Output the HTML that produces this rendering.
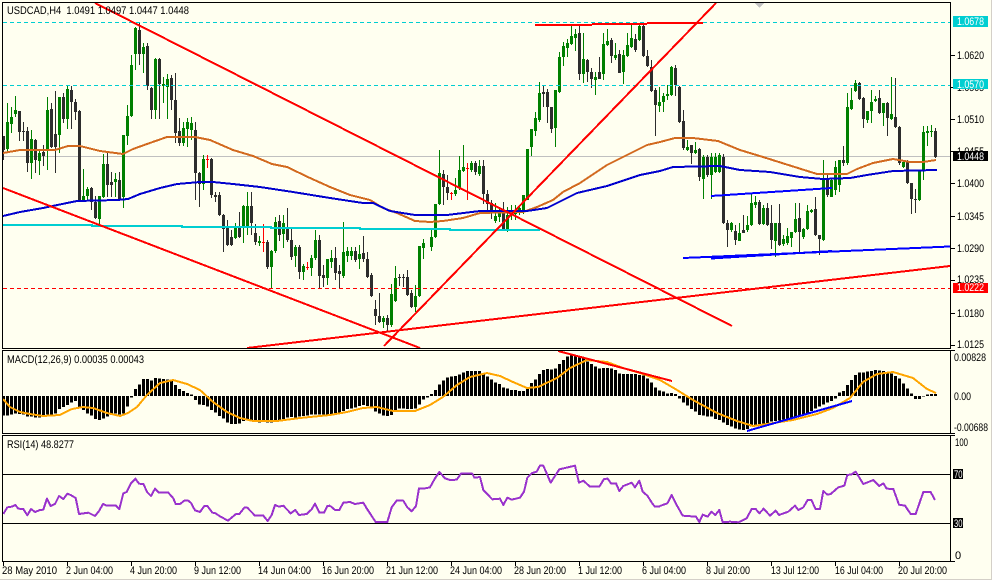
<!DOCTYPE html>
<html><head><meta charset="utf-8"><style>
html,body{margin:0;padding:0;background:#FFFFF0;width:992px;height:580px;overflow:hidden}
svg{display:block}
text{font-family:"Liberation Sans",sans-serif;font-size:11px;fill:#000}
</style></head><body>
<svg width="992" height="580" viewBox="0 0 992 580" xmlns="http://www.w3.org/2000/svg" shape-rendering="crispEdges">
<rect width="992" height="580" fill="#FFFFF0"/>
<rect x="991" y="0" width="1" height="580" fill="#D4D0C8"/>
<rect x="0" y="579" width="992" height="1" fill="#D4D0C8"/>

<!-- silver bid line -->
<path d="M3 156.5H950" stroke="#C0C0C0" fill="none"/>

<!-- candles: black wicks -->
<path fill="none" stroke="#2d2d2d" stroke-width="1" d="M3.5 136V160M19.5 111V141M23.5 122V141M27.5 127V172M35.5 139V173M43.5 145V166M51.5 103V148M55.5 91V173M63.5 93V123M71.5 86V129M75.5 99V120M79.5 110V202M91.5 187V210M95.5 196V219M107.5 153V197M111.5 172V197M119.5 172V199M139.5 23V65M147.5 43V90M151.5 87V119M159.5 58V119M171.5 75V110M175.5 73V143M179.5 118V146M195.5 122V200M199.5 172V207M211.5 158V198M215.5 192V202M219.5 192V216M223.5 214V252M227.5 220V246M231.5 230V246M239.5 212V238M251.5 192V235M255.5 224V245M267.5 240V269M279.5 215V241M287.5 208V242M291.5 227V260M299.5 245V279M319.5 235V289M323.5 265V287M335.5 247V280M339.5 265V288M355.5 247V262M363.5 236V262M367.5 252V278M371.5 273V297M375.5 300V325M379.5 293V323M387.5 315V331M399.5 274V286M403.5 274V287M407.5 270V296M411.5 290V308M443.5 170V205M447.5 175V200M475.5 161V175M483.5 160V204M487.5 190V214M491.5 200V219M503.5 202V229M543.5 85V107M547.5 89V123M551.5 107V133M579.5 26V80M587.5 59V82M591.5 68V88M599.5 57V79M611.5 38V63M619.5 50V73M635.5 34V52M643.5 24V57M647.5 50V67M651.5 60V92M655.5 88V136M675.5 65V96M679.5 86V123M683.5 110V150M691.5 145V164M699.5 148V181M707.5 155V177M723.5 154V224M727.5 220V247M735.5 225V245M743.5 215V233M759.5 200V225M767.5 203V226M771.5 205V249M779.5 204V246M799.5 203V252M815.5 197V236M819.5 235V255M827.5 175V197M843.5 146V166M859.5 82V100M863.5 97V128M879.5 90V114M887.5 102V136M895.5 78V128M899.5 126V165M907.5 160V184M911.5 183V214M915.5 189V213M935.5 128V158"/>
<!-- black bodies -->
<path fill="none" stroke="#2d2d2d" stroke-width="3" d="M3.5 136V150M19.5 111V132M23.5 131V132M27.5 131V163M35.5 140V160M43.5 152V156M51.5 109V147M55.5 134V147M63.5 97V119M71.5 90V102M75.5 102V112M79.5 111V200M91.5 188V202M95.5 202V218M107.5 164V185M111.5 182V185M119.5 180V199M139.5 30V54M147.5 46V86M151.5 88V110M159.5 59V84M171.5 78V100M175.5 100V133M179.5 131V143M195.5 130V173M199.5 173V184M211.5 159V195M215.5 195V197M219.5 195V215M223.5 215V229M227.5 228V245M231.5 237V245M239.5 226V237M251.5 206V223M255.5 233V242M267.5 242V267M279.5 221V235M287.5 228V240M291.5 240V257M299.5 247V272M319.5 240V276M323.5 275V278M335.5 258V273M339.5 271V274M355.5 251V260M363.5 253V259M367.5 259V277M371.5 275V296M375.5 309V316M379.5 316V322M387.5 318V325M399.5 277V278M403.5 277V278M407.5 277V295M411.5 293V307M443.5 174V187M447.5 187V193M475.5 163V172M483.5 166V194M487.5 194V204M491.5 203V213M503.5 213V229M543.5 92V94M547.5 92V107M551.5 107V129M579.5 33V74M587.5 60V72M591.5 72V79M599.5 72V79M611.5 40V56M619.5 54V73M635.5 39V50M643.5 26V56M647.5 56V66M651.5 67V91M655.5 90V105M675.5 68V85M679.5 87V122M683.5 121V148M691.5 145V153M699.5 149V177M707.5 157V175M723.5 157V223M727.5 223V230M735.5 231V240M743.5 230V233M759.5 202V224M767.5 208V225M771.5 223V240M779.5 223V245M799.5 218V232M815.5 209V235M819.5 235V239M827.5 180V195M843.5 160V163M859.5 83V99M863.5 98V119M879.5 98V113M887.5 103V118M895.5 117V127M899.5 127V163M907.5 162V183M911.5 183V199M915.5 199V200M935.5 131V157"/>
<!-- green wicks -->
<path fill="none" stroke="#008000" stroke-width="1" d="M7.5 103V153M11.5 107V133M15.5 96V117M31.5 130V179M39.5 149V175M47.5 97V170M59.5 97V153M67.5 85V129M83.5 169V200M87.5 187V200M99.5 196V224M103.5 154V198M115.5 173V197M123.5 135V208M127.5 105V145M131.5 55V117M135.5 27V70M143.5 43V73M155.5 58V119M163.5 77V103M167.5 74V119M183.5 122V146M187.5 118V147M191.5 117V140M203.5 155V190M235.5 223V239M243.5 205V243M247.5 192V235M259.5 236V246M271.5 250V289M275.5 217V253M283.5 215V248M295.5 245V267M303.5 264V280M311.5 255V276M315.5 230V260M327.5 259V285M331.5 250V268M343.5 222V278M347.5 247V262M351.5 247V260M359.5 245V269M383.5 316V328M391.5 284V327M395.5 266V302M415.5 285V312M419.5 246V297M423.5 239V259M431.5 230V251M435.5 204V238M439.5 150V205M455.5 178V196M459.5 156V190M463.5 145V172M471.5 161V172M479.5 160V176M495.5 203V223M499.5 208V222M507.5 207V232M511.5 205V220M515.5 205V220M519.5 205V215M523.5 195V214M527.5 149V200M531.5 129V156M535.5 112V136M539.5 82V122M555.5 90V147M559.5 52V93M563.5 42V66M567.5 39V57M571.5 26V45M575.5 29V51M583.5 33V83M595.5 72V95M603.5 33V80M607.5 29V46M615.5 43V60M623.5 50V84M627.5 33V57M631.5 25V48M639.5 24V41M659.5 87V112M663.5 93V112M667.5 85V100M671.5 66V96M687.5 140V151M695.5 142V154M703.5 155V199M711.5 153V199M715.5 153V173M719.5 153V173M731.5 222V232M739.5 223V241M747.5 216V232M751.5 193V226M755.5 196V208M763.5 205V225M775.5 223V257M783.5 235V246M787.5 228V245M791.5 232V247M795.5 203V233M803.5 228V239M807.5 205V230M811.5 209V213M823.5 160V241M831.5 178V197M835.5 161V195M839.5 160V192M847.5 93V165M851.5 88V110M855.5 80V92M867.5 111V123M871.5 90V123M875.5 96V102M883.5 103V126M891.5 77V120M903.5 162V168M919.5 170V201M923.5 126V180M927.5 126V146M931.5 125V137"/>
<!-- green bodies -->
<path fill="none" stroke="#008000" stroke-width="3" d="M7.5 122V149M11.5 117V124M15.5 110V114M31.5 139V163M39.5 153V161M47.5 110V149M59.5 97V135M67.5 89V119M83.5 196V200M87.5 189V196M99.5 196V219M103.5 164V197M115.5 179V182M123.5 135V197M127.5 116V136M131.5 65V116M135.5 28V54M143.5 47V54M155.5 59V110M163.5 84V86M167.5 79V87M183.5 128V143M187.5 122V129M191.5 123V130M203.5 159V184M235.5 226V238M243.5 206V226M247.5 206V226M259.5 241V243M271.5 251V267M275.5 222V251M283.5 223V234M295.5 247V256M303.5 266V272M311.5 258V268M315.5 240V258M327.5 259V278M331.5 258V262M343.5 252V276M347.5 251V256M351.5 251V256M359.5 254V259M383.5 318V322M391.5 294V325M395.5 278V301M415.5 296V307M419.5 246V296M423.5 243V248M431.5 237V247M435.5 204V237M439.5 173V204M455.5 190V194M459.5 170V188M463.5 167V171M471.5 163V170M479.5 166V174M495.5 216V221M499.5 213V217M507.5 215V229M511.5 212V215M515.5 212V214M519.5 208V212M523.5 195V212M527.5 149V200M531.5 129V147M535.5 118V131M539.5 93V120M555.5 90V128M559.5 57V92M563.5 46V57M567.5 43V48M571.5 36V44M575.5 34V38M583.5 59V74M595.5 77V80M603.5 44V74M607.5 41V45M615.5 55V58M623.5 55V72M627.5 45V56M631.5 38V47M639.5 26V40M659.5 102V106M663.5 96V102M667.5 94V96M671.5 67V95M687.5 147V150M695.5 150V153M703.5 157V179M711.5 157V175M715.5 157V172M719.5 155V172M731.5 223V230M739.5 233V241M747.5 225V230M751.5 203V225M755.5 202V205M763.5 208V224M775.5 223V241M783.5 239V244M787.5 236V243M791.5 232V238M795.5 219V232M803.5 229V237M807.5 211V229M811.5 210V212M823.5 178V240M831.5 180V197M835.5 167V190M839.5 160V185M847.5 107V163M851.5 100V109M855.5 83V91M867.5 111V120M871.5 102V111M875.5 99V101M883.5 103V113M891.5 114V119M903.5 162V167M919.5 170V200M923.5 132V170M927.5 131V133M931.5 131V132"/>
<!-- red doji -->
<path fill="none" stroke="#FF0000" stroke-width="1" d="M207.5 155V168M206 159.5H209M263.5 224V252M262 242.5H265M307.5 262V270M306 267.5H309M451.5 192V200M450 193.5H453M467.5 163V200M466 168.5H469"/>

<!-- moving averages -->
<g fill="none" stroke-width="2" stroke-linejoin="round">
<polyline stroke="#D2691E" points="3,153 20,150 55,150 68,146 80,146 100,151 123,154 133,149 147,144 167,137 195,137 210,140 233,150 253,156 272,164 287,167 310,178 330,187 350,195 370,200 383,208 397,213 415,221 430,222 443,221 463,218 480,213 523,212 537,207 553,200 563,192 580,183 607,165 637,150 647,145 660,142 675,138 693,138 718,141 740,150 763,157 782,163 817,174 847,174 857,169 873,163 893,159 910,162 923,162 936,160"/>
<polyline stroke="#0000CD" points="3,216 20,212 43,208 67,203 77,201 117,200 128,199 140,194 160,188 177,184 200,182 213,182 233,184 260,187 293,192 330,198 363,203 373,203 390,211 415,215 447,215 480,211 527,211 547,208 563,200 577,193 607,186 640,175 660,171 673,167 720,166 740,170 770,172 800,177 823,179 850,178 867,175 893,171 937,170"/>
<polyline stroke="#00CED1" points="3,225 92,225 92,226 182,226 182,227 271,227 271,228 360,228 360,229 450,229 450,230 540,230"/>
</g>

<!-- horizontal dashed levels -->
<g fill="none">
<path d="M3 22.5H950" stroke="#00CED1" stroke-dasharray="4 3"/>
<path d="M3 85.5H950" stroke="#00CED1" stroke-dasharray="4 3"/>
<path d="M3 288.5H950" stroke="#FF0000" stroke-dasharray="4 3"/>
</g>

<!-- trendlines -->
<g fill="none" stroke="#FF0000" stroke-width="2">
<path d="M95 3L732 326"/>
<path d="M3 188L420 348"/>
<path d="M247 348L950 266"/>
<path d="M384 346L716 3"/>
<path d="M535 25H592M592 24H647M647 23H703"/>
</g>
<g fill="none" stroke="#0000FF" stroke-width="2">
<path d="M711 196L832 188"/>
<path d="M683 258L950 246.5"/>
<path d="M711 258.5L832 251"/>
</g>
<polygon points="755,3 764,3 759.5,8" fill="#C0C0C0"/>

<!-- MACD histogram -->
<g transform="translate(.5,345) scale(.33333)" fill="none" stroke="#000" stroke-width="9">
<path d="M9 153V212M21 153V212M33 153V208M45 153V205M57 153V207M69 153V208M81 153V214M93 153V215M105 153V217M117 153V218M129 153V216M141 153V208M153 153V208M165 153V205M177 153V192M189 153V186M201 153V180M213 153V172M225 153V168M237 153V186M249 153V195M261 153V205M273 153V212M285 153V222M297 153V225M309 153V220M321 153V215M333 153V207M345 153V205M357 153V208M369 153V205M381 153V185M393 153V158M405 153V132M417 153V118M429 153V102M441 153V102M453 153V106M465 153V99M477 153V100M489 153V102M501 153V104M513 153V108M525 153V120M537 153V132M549 153V138M561 153V144M573 153V148M585 153V165M597 153V178M609 153V180M621 153V185M633 153V195M645 153V203M657 153V213M669 153V220M681 153V232M693 153V237M705 153V237M717 153V235M729 153V228M741 153V222M753 153V228M765 153V228M777 153V232M789 153V230M801 153V232M813 153V232M825 153V230M837 153V226M849 153V222M861 153V218M873 153V216M885 153V217M897 153V215M909 153V213M921 153V211M933 153V209M945 153V208M957 153V208M969 153V208M981 153V209"/>
<path transform="translate(990,0)" d="M3 153V212M15 153V208M27 153V207M39 153V198M51 153V192M63 153V190M75 153V188M87 153V183M99 153V180M111 153V183M123 153V184M135 153V200M147 153V205M159 153V212M171 153V213M183 153V210M195 153V197M207 153V190M219 153V190M231 153V192M243 153V192M255 153V190M267 153V178M279 153V163M291 153V158M303 153V147M315 153V135M327 153V118M339 153V106M351 153V98M363 153V95M375 153V93M387 153V88M399 153V82M411 153V78M423 153V78M435 153V78M447 153V78M459 153V85M471 153V95M483 153V103M495 153V112M507 153V117M519 153V127M531 153V130M543 153V135M555 153V135M567 153V138M579 153V138M591 153V132M603 153V114M615 153V103M627 153V87M639 153V75M651 153V72M663 153V73M675 153V70M687 153V57M699 153V45M711 153V35M723 153V30M735 153V33M747 153V35M759 153V40M771 153V50M783 153V57M795 153V65M807 153V70M819 153V69M831 153V69M843 153V70M855 153V75M867 153V85M879 153V87M891 153V87M903 153V87M915 153V87M927 153V90M939 153V92M951 153V100M963 153V113M975 153V127M987 153V137"/>
<path transform="translate(1980,0)" d="M9 153V140M21 153V145M33 153V144M45 153V147M57 153V160M69 153V172M81 153V182M93 153V192M105 153V200M117 153V210M129 153V212M141 153V215M153 153V215M165 153V222M177 153V225M189 153V232M201 153V240M213 153V245M225 153V250M237 153V254M249 153V255M261 153V252M273 153V245M285 153V240M297 153V238M309 153V236M321 153V234M333 153V230M345 153V228M357 153V226M369 153V223M381 153V222M393 153V220M405 153V218M417 153V212M429 153V208M441 153V205M453 153V198M465 153V190M477 153V185M489 153V178M501 153V172M513 153V168M525 153V160M537 153V143M549 153V138M561 153V120M573 153V105M585 153V90M597 153V82M609 153V82M621 153V80M633 153V78M645 153V75M657 153V77M669 153V78M681 153V82M693 153V85M705 153V93M717 153V100M729 153V115M741 153V130M753 153V145M765 153V162M777 153V162M789 153V155M801 153V148M813 153V147M825 153V147"/>
</g>
<!-- MACD signal -->
<polyline fill="none" stroke="#FFA500" stroke-width="2" points="3,399 10,407 20,412 30,414 43,416 60,415 72,409 83,407 93,408 107,413 120,416 128,413 137,407 147,395 160,383 173,380 187,384 200,390 213,402 227,412 240,418 253,421 277,421 300,418 330,415 347,412 363,408 377,407 393,411 415,411 430,405 443,397 457,385 470,377 487,373 500,376 513,382 527,388 538,387 557,378 570,368 587,360 607,362 623,368 640,373 660,380 677,390 693,400 717,413 737,421 753,426 767,424 793,420 817,414 833,408 850,398 863,382 877,374 893,372 913,378 927,389 936,393"/>
<path fill="none" stroke="#FF0000" stroke-width="2" d="M558 351L672 381"/>
<path fill="none" stroke="#0000FF" stroke-width="2" d="M747 431L852 401"/>

<!-- RSI -->
<path d="M3 474.5H950M3 523.5H950" stroke="#000" fill="none"/>
<g fill="none" stroke="#9932CC" stroke-width="6" stroke-linejoin="round">
<polyline transform="translate(0,430) scale(.33333)" points="10,252 22,232 35,230 46,225 55,236 70,237 82,256 93,237 105,246 120,240 130,239 141,206 152,228 165,222 177,198 190,207 202,191 212,195 227,204 237,252 265,248 285,258 297,243 309,222 320,227 348,227 358,237 370,190 380,186 393,160 406,146 417,161 430,162 442,187 453,198 465,176 477,188 505,188 520,205 527,222 540,222 553,212 565,212 573,219 585,241 600,246 613,228 622,228 637,248 645,249 660,259 684,272 708,252 718,252 733,233 742,233 765,257 790,257 803,273 815,255 825,225 837,230 850,227 872,250 886,240 897,255 920,252 935,238 945,221 958,248 972,248 982,228 990,227"/>
<polyline transform="translate(330,430) scale(.33333)" points="0,227 15,240 28,240 40,218 60,216 75,222 100,218 110,235 137,276 172,276 185,232 200,212 220,212 232,232 245,244 258,228 267,175 285,175 300,172 315,145 328,126 345,145 360,150 380,149 393,131 427,131 433,143 450,141 460,180 487,208 510,206 520,225 532,203 545,209 570,203 582,185 592,143 605,130 620,125 630,107 640,107 662,158 688,118 735,107 747,158 760,152 780,170 808,170 822,147 833,146 843,160 858,160 868,183 880,168 905,158 915,172 928,152 938,185 952,197 968,222 975,230 990,230"/>
<polyline transform="translate(660,430) scale(.33333)" points="0,228 22,220 35,195 50,225 68,257 108,260 118,276 128,254 143,260 154,245 166,255 178,240 188,277 210,275 235,277 260,265 275,237 287,237 298,250 311,236 330,257 347,242 357,255 385,245 405,227 415,240 430,232 443,210 454,210 467,237 480,237 490,183 502,194 512,192 535,172 553,167 562,135 575,133 587,125 610,162 640,150 658,168 670,160 680,176 700,177 717,224 735,227 752,252 767,252 790,186 812,186 825,210"/>
</g>

<!-- frames -->
<g fill="none" stroke="#000" stroke-width="1">
<path d="M2.5 2.5H950.5V348.5H2.5Z"/>
<path d="M2.5 350.5H950.5V433.5H2.5Z"/>
<path d="M2.5 435.5H950.5V561.5H2.5Z"/>
<path d="M951 55.5H955M951 87.5H955M951 119.5H955M951 151.5H955M951 183.5H955M951 216.5H955M951 248.5H955M951 280.5H955M951 313.5H955M951 345.5H955M951 350.5H955M951 433.5H955M951 435.5H955M951 561.5H955"/>
<path d="M3.5 562V566M67.5 562V566M131.5 562V566M195.5 562V566M259.5 562V566M323.5 562V566M387.5 562V566M451.5 562V566M515.5 562V566M579.5 562V566M643.5 562V566M707.5 562V566M771.5 562V566M835.5 562V566M899.5 562V566"/>
</g>

<!-- header labels -->
<g shape-rendering="auto" text-rendering="geometricPrecision">
<text x="7" y="14" textLength="182" lengthAdjust="spacingAndGlyphs" xml:space="preserve">USDCAD,H4  1.0491 1.0497 1.0447 1.0448</text>
<text x="7" y="363" textLength="137" lengthAdjust="spacingAndGlyphs">MACD(12,26,9) 0.00035 0.00043</text>
<text x="7" y="448" textLength="67" lengthAdjust="spacingAndGlyphs">RSI(14) 48.8277</text>

<!-- price axis -->
<text x="957" y="59" textLength="27" lengthAdjust="spacingAndGlyphs">1.0620</text>
<text x="957" y="91" textLength="27" lengthAdjust="spacingAndGlyphs">1.0565</text>
<text x="957" y="123" textLength="27" lengthAdjust="spacingAndGlyphs">1.0510</text>
<text x="957" y="155" textLength="27" lengthAdjust="spacingAndGlyphs">1.0455</text>
<text x="957" y="187" textLength="27" lengthAdjust="spacingAndGlyphs">1.0400</text>
<text x="957" y="220" textLength="27" lengthAdjust="spacingAndGlyphs">1.0345</text>
<text x="957" y="252" textLength="27" lengthAdjust="spacingAndGlyphs">1.0290</text>
<text x="957" y="283" textLength="27" lengthAdjust="spacingAndGlyphs">1.0235</text>
<text x="957" y="317" textLength="27" lengthAdjust="spacingAndGlyphs">1.0180</text>
<text x="957" y="348" textLength="27" lengthAdjust="spacingAndGlyphs">1.0125</text>

<rect x="953" y="16" width="35" height="11" fill="#00CED1" shape-rendering="crispEdges"/>
<text x="957" y="25" textLength="27" lengthAdjust="spacingAndGlyphs" style="fill:#fff">1.0678</text>
<rect x="953" y="79" width="35" height="10" fill="#00CED1" shape-rendering="crispEdges"/>
<text x="957" y="88" textLength="27" lengthAdjust="spacingAndGlyphs" style="fill:#fff">1.0570</text>
<rect x="953" y="151" width="35" height="10" fill="#000" shape-rendering="crispEdges"/>
<text x="957" y="160" textLength="27" lengthAdjust="spacingAndGlyphs" style="fill:#fff">1.0448</text>
<rect x="953" y="283" width="35" height="10" fill="#FF0000" shape-rendering="crispEdges"/>
<text x="957" y="291" textLength="27" lengthAdjust="spacingAndGlyphs" style="fill:#fff">1.0222</text>

<!-- MACD axis -->
<text x="954" y="361" textLength="32" lengthAdjust="spacingAndGlyphs">0.00828</text>
<text x="954" y="400" textLength="17" lengthAdjust="spacingAndGlyphs">0.00</text>
<text x="954" y="431" textLength="34" lengthAdjust="spacingAndGlyphs">-0.00688</text>

<!-- RSI axis -->
<text x="955" y="446" textLength="13" lengthAdjust="spacingAndGlyphs">100</text>
<rect x="953" y="469" width="10" height="10" fill="#000" shape-rendering="crispEdges"/>
<text x="954" y="478" textLength="8.5" lengthAdjust="spacingAndGlyphs" style="fill:#fff">70</text>
<rect x="953" y="518" width="10" height="10" fill="#000" shape-rendering="crispEdges"/>
<text x="954" y="527" textLength="8.5" lengthAdjust="spacingAndGlyphs" style="fill:#fff">30</text>
<text x="955" y="559">0</text>

<!-- time axis -->
<text x="2" y="574" textLength="55" lengthAdjust="spacingAndGlyphs">28 May 2010</text>
<text x="66" y="574" textLength="47" lengthAdjust="spacingAndGlyphs">2 Jun 04:00</text>
<text x="130" y="574" textLength="47" lengthAdjust="spacingAndGlyphs">4 Jun 20:00</text>
<text x="194" y="574" textLength="47" lengthAdjust="spacingAndGlyphs">9 Jun 12:00</text>
<text x="258" y="574" textLength="53" lengthAdjust="spacingAndGlyphs">14 Jun 04:00</text>
<text x="322" y="574" textLength="52" lengthAdjust="spacingAndGlyphs">16 Jun 20:00</text>
<text x="386" y="574" textLength="52" lengthAdjust="spacingAndGlyphs">21 Jun 12:00</text>
<text x="450" y="574" textLength="52" lengthAdjust="spacingAndGlyphs">24 Jun 04:00</text>
<text x="514" y="574" textLength="52" lengthAdjust="spacingAndGlyphs">28 Jun 20:00</text>
<text x="578" y="574" textLength="44" lengthAdjust="spacingAndGlyphs">1 Jul 12:00</text>
<text x="642" y="574" textLength="44" lengthAdjust="spacingAndGlyphs">6 Jul 04:00</text>
<text x="706" y="574" textLength="44" lengthAdjust="spacingAndGlyphs">8 Jul 20:00</text>
<text x="771" y="574" textLength="48" lengthAdjust="spacingAndGlyphs">13 Jul 12:00</text>
<text x="835" y="574" textLength="48" lengthAdjust="spacingAndGlyphs">16 Jul 04:00</text>
<text x="898" y="574" textLength="49" lengthAdjust="spacingAndGlyphs">20 Jul 20:00</text>
</g>
</svg>
</body></html>
